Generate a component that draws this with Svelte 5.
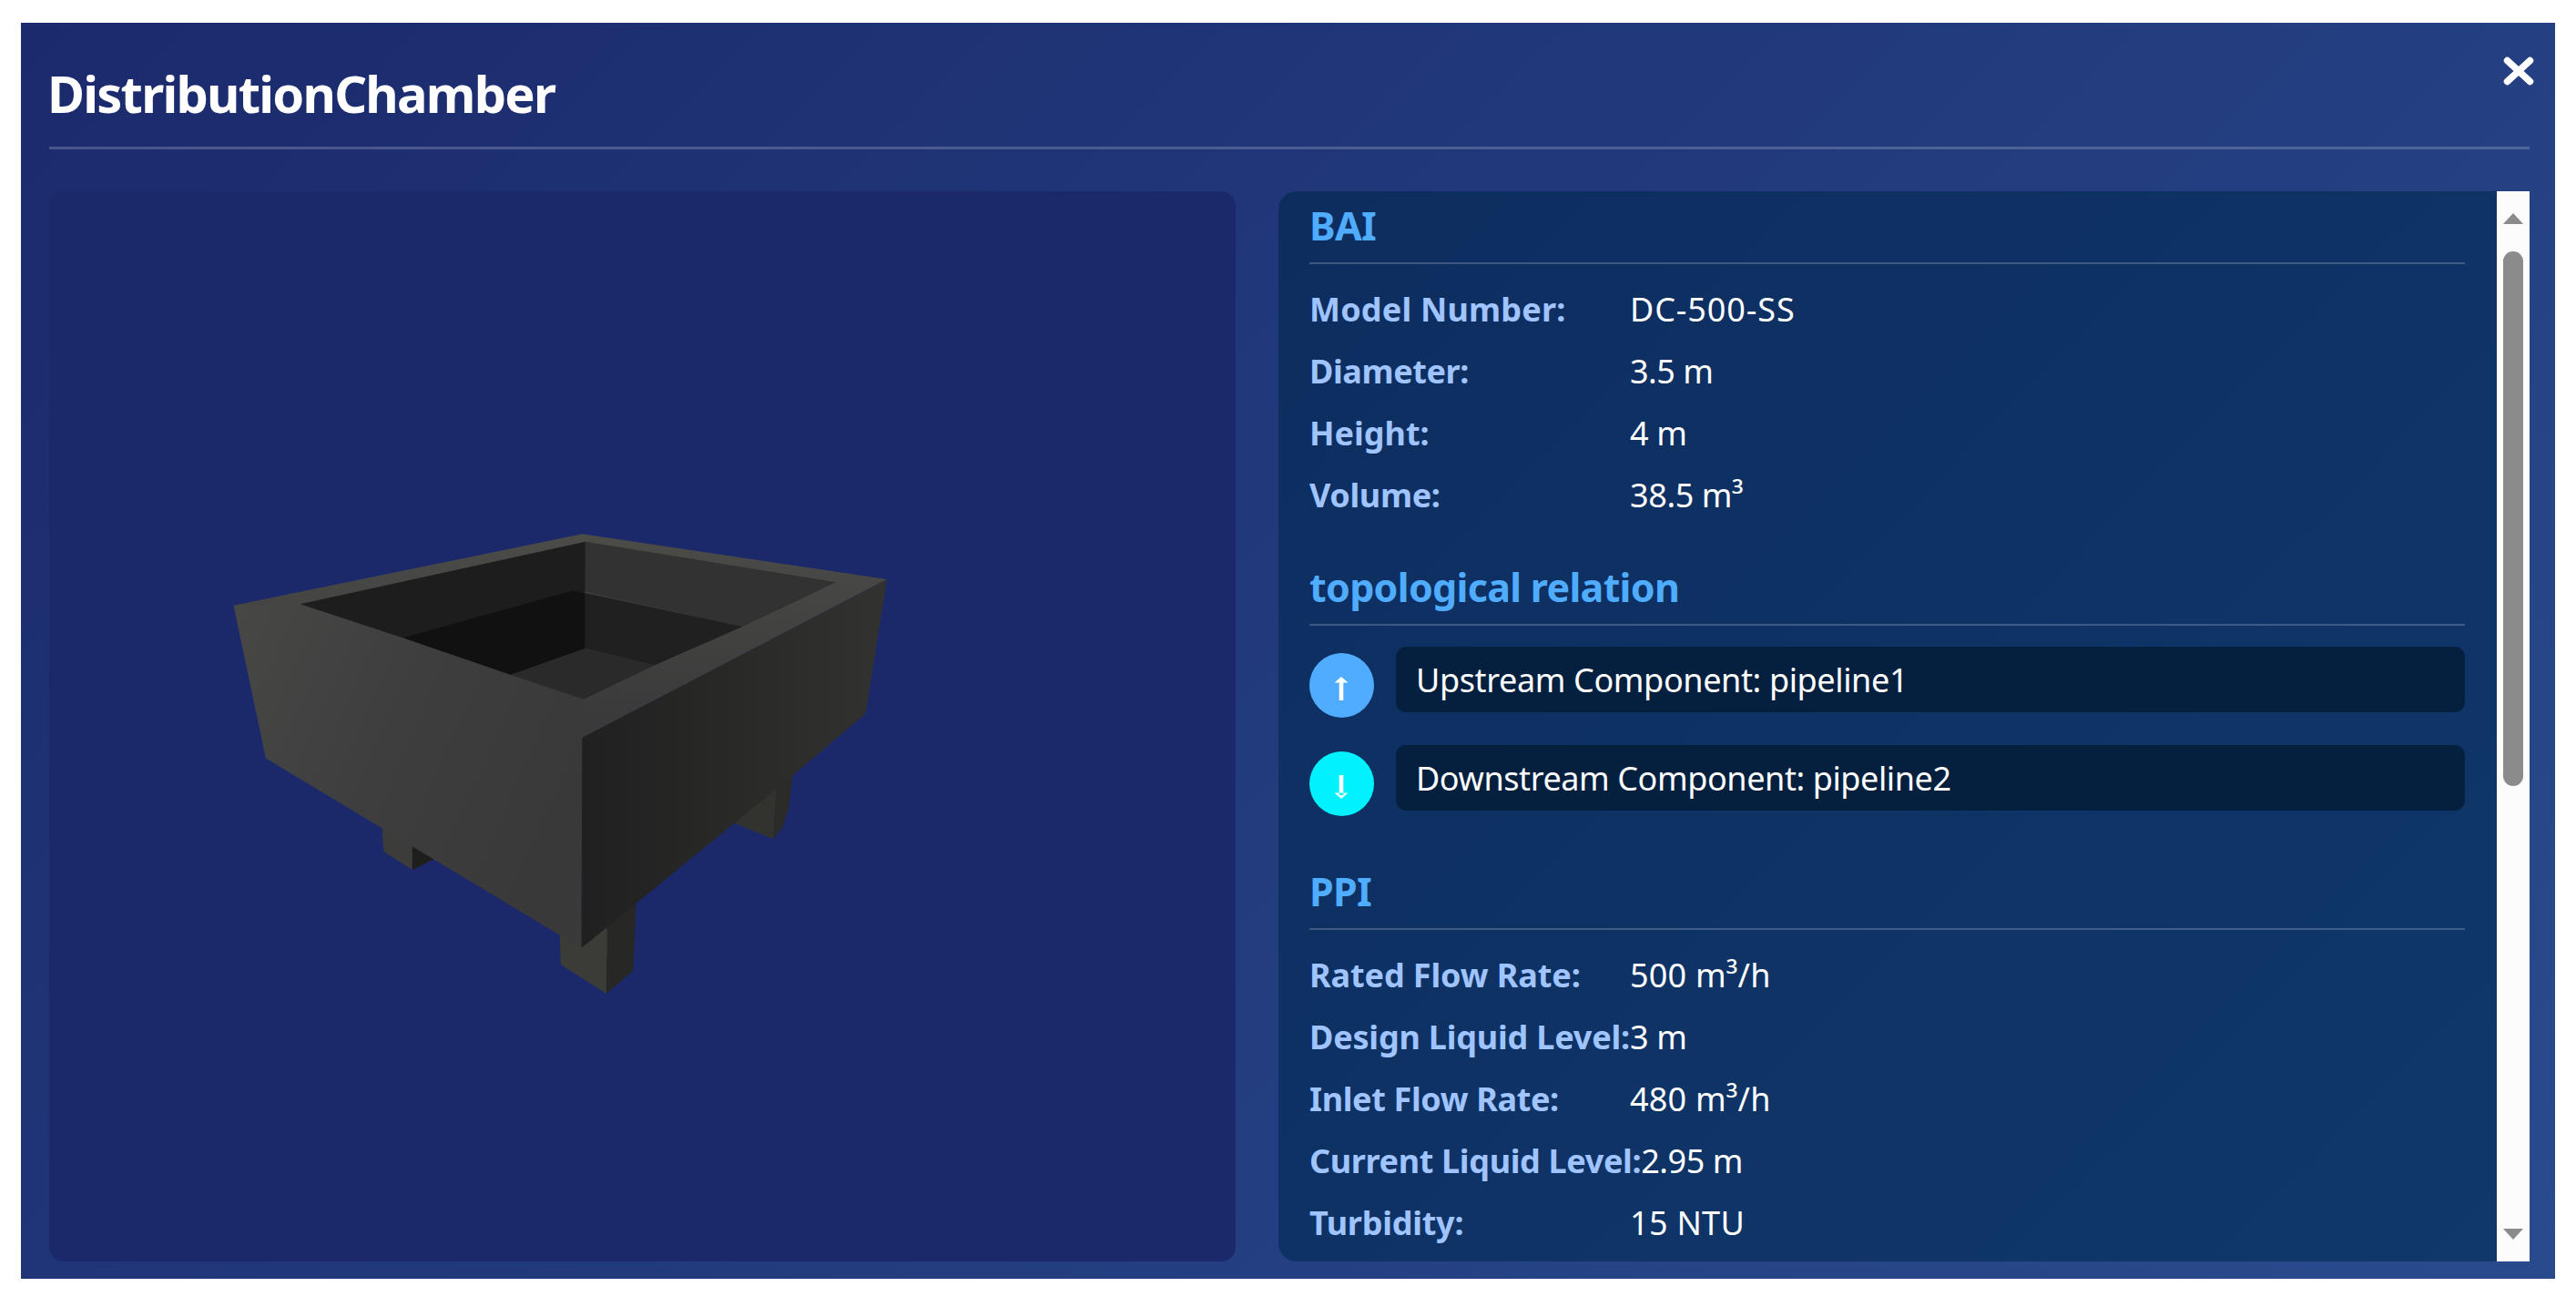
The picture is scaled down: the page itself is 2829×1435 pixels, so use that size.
<script>
  const basicInfo = [
    { label: 'Model Number:', value: 'DC-500-SS', labelTracking: 0.2, tracking: 0.9 },
    { label: 'Diameter:', value: '3.5 m', labelTracking: -0.4, tracking: -0.5 },
    { label: 'Height:', value: '4 m', labelTracking: 0, tracking: -0.4 },
    { label: 'Volume:', value: '38.5 m³', labelTracking: -0.35, tracking: -0.4 }
  ];

  const processInfo = [
    { label: 'Rated Flow Rate:', value: '500 m³/h', labelTracking: -0.1, tracking: 0.2 },
    { label: 'Design Liquid Level:', value: '3 m', labelTracking: -0.2, tracking: -0.4 },
    { label: 'Inlet Flow Rate:', value: '480 m³/h', labelTracking: -0.35, tracking: 0.2 },
    { label: 'Current Liquid Level:', value: '2.95 m', labelTracking: -0.35, tracking: -0.45 },
    { label: 'Turbidity:', value: '15 NTU', labelTracking: -0.25, tracking: 0.3 }
  ];

  let open = $state(true);
</script>

{#snippet rows(items)}
  <ul class="info-list">
    {#each items as item}
      <li>
        <span class="label" style="letter-spacing: {item.labelTracking}px">{item.label}</span>
        <span class="value" style="letter-spacing: {item.tracking}px">{item.value}</span>
      </li>
    {/each}
  </ul>
{/snippet}

{#if open}
  <main class="modal">
    <button class="close" type="button" aria-label="Close" onclick={() => (open = false)}>
      <svg viewBox="0 0 34 32"><path d="M4.5 4.5 29.5 27.5M29.5 4.5 4.5 27.5" /></svg>
    </button>

    <header>
      <h2>DistributionChamber</h2>
    </header>

    <div class="content">
      <section class="model">
        <svg viewBox="53 210 1304 1175" aria-hidden="true">
          <defs>
            <linearGradient id="front" x1="256" y1="680" x2="640" y2="850" gradientUnits="userSpaceOnUse">
              <stop offset="0" stop-color="#474746" />
              <stop offset="0.5" stop-color="#3e3e3e" />
              <stop offset="1" stop-color="#393939" />
            </linearGradient>
            <linearGradient id="side" x1="638" y1="0" x2="973" y2="0" gradientUnits="userSpaceOnUse">
              <stop offset="0" stop-color="#202020" />
              <stop offset="1" stop-color="#323230" />
            </linearGradient>
            <linearGradient id="rim" x1="0" y1="590" x2="0" y2="790" gradientUnits="userSpaceOnUse">
              <stop offset="0" stop-color="#4b4b48" />
              <stop offset="0.5" stop-color="#424241" />
              <stop offset="1" stop-color="#3a3a3a" />
            </linearGradient>
          </defs>

          <!-- Legs -->
          <polygon fill="#3c3c3a" points="418,900 420.3,935 451.8,955 452,915" />
          <polygon fill="#1e1e1d" points="451.8,915 485,930 475.1,943.6 451.8,955" />
          <polygon fill="#32322f" points="804.7,903.3 848.3,921.2 852,860 810,880" />
          <polygon fill="#2b2b28" points="852,860 870.2,846 865,888 858,909 848.3,921.2" />
          <polygon fill="#3b3b38" points="613.2,1010 614.7,1059 665.1,1091 665.6,1000" />
          <polygon fill="#272725" points="665.6,1000 698,985 694.2,1065.9 665.1,1091" />

          <!-- Outer walls and rim -->
          <polygon fill="url(#rim)" points="255.5,664.7 638.4,586.2 973,636.1 638.4,810" />
          <polygon fill="url(#front)" points="255.5,664.7 328.7,663.3 640,767.7 638.4,810 637.5,1041 290.9,832.4" />
          <polygon fill="url(#side)" points="638.4,810 973,636.1 949.6,783.5 870.2,851 637.5,1041" />
          <polygon fill="#3b3b38" points="637.5,1041 665.6,1019 665.6,1050 640,1050" />

          <!-- Inside of the tank -->
          <polygon fill="#1d1d1d" points="328.7,663.3 641.8,594.8 641.8,650 441.2,700.2" />
          <polygon fill="#323232" points="641.8,594.8 917.2,639.2 814.4,688.1 641.8,650" />
          <polygon fill="#111111" points="441.2,700.2 627.8,648.5 641.8,651 641.8,711.9 559.9,741.1" />
          <polygon fill="#202020" points="641.8,651 814.4,688.1 717.5,730.5 641.8,711.9" />
          <polygon fill="#2a2a2a" points="559.9,741.1 641.8,711.9 717.5,730.5 640,767.7" />
        </svg>
      </section>

      <section class="details">
        <div class="scroll">
          <h3>BAI</h3>
          {@render rows(basicInfo)}

          <h3>topological relation</h3>
          <div class="relation">
            <span class="arrow up">
              <svg viewBox="0 0 16 26"><path d="M5.7 4h4.6v22H5.7zM8 0l7.5 6.5H.5z" /></svg>
            </span>
            <p class="upstream">Upstream Component: pipeline1</p>
          </div>
          <div class="relation">
            <span class="arrow down">
              <svg viewBox="0 0 16 26"><path d="M5.7 0h4.6v22H5.7zM8 26l7.5-6.5H.5z" /></svg>
            </span>
            <p class="downstream">Downstream Component: pipeline2</p>
          </div>

          <h3 class="process">PPI</h3>
          {@render rows(processInfo)}
        </div>

        <div class="scrollbar">
          <svg viewBox="0 0 22 12"><path d="M11 0 22 12H0z" /></svg>
          <div class="track"><div class="thumb"></div></div>
          <svg viewBox="0 0 22 12"><path d="M0 0h22L11 12z" /></svg>
        </div>
      </section>
    </div>
  </main>
{/if}

<style>
  :global(body) {
    background: #fff;
  }

  .modal {
    position: relative;
    box-sizing: border-box;
    width: 2783px;
    height: 1379px;
    margin: 25px 0 0 23px;
    padding: 0 28px 19px 31px;
    display: flex;
    flex-direction: column;
    background: linear-gradient(135deg, #1b2a6c, #294b8d);
    color: #fff;
    font-family: "Noto Sans", "Open Sans", sans-serif;
    font-size: 36px;
  }

  .close {
    position: absolute;
    top: 37px;
    right: 23px;
    width: 34px;
    height: 32px;
    padding: 0;
    border: 0;
    background: none;
    cursor: pointer;
  }

  .close svg {
    display: block;
  }

  .close path {
    stroke: #fff;
    stroke-width: 7.5;
    stroke-linecap: round;
  }

  header {
    height: 136px;
    margin-bottom: 46px;
    border-bottom: 3px solid rgba(255, 255, 255, 0.2);
  }

  h2 {
    margin: 0 0 0 -2px;
    padding-top: 41px;
    font-size: 56px;
    line-height: 72px;
    letter-spacing: -1.75px;
  }

  .content {
    flex: 1;
    min-height: 0;
    display: grid;
    grid-template-columns: 1303px 1374px;
    gap: 47px;
  }

  .model {
    border-radius: 16px;
    background: #1b296b;
    overflow: hidden;
  }

  .model svg {
    display: block;
    width: 1304px;
    height: 1175px;
  }

  .details {
    display: flex;
    border-radius: 20px 0 0 20px;
    background: linear-gradient(135deg, #0d2d5f, #10386b);
    overflow: hidden;
  }

  .scroll {
    flex: 1;
    min-width: 0;
    padding: 9px 35px 0 34px;
    overflow: hidden;
  }

  h3 {
    margin: 48px 0 0;
    padding-bottom: 11px;
    border-bottom: 2px solid rgba(255, 255, 255, 0.2);
    color: #4facfe;
    font-size: 43px;
    line-height: 58px;
    letter-spacing: -0.7px;
  }

  h3:first-child {
    margin-top: 0;
  }

  h3.process {
    margin-top: 54px;
  }

  .info-list {
    display: flex;
    flex-direction: column;
    gap: 20px;
    margin: 26px 0 0;
    padding: 0;
    list-style: none;
  }

  li {
    display: flex;
    line-height: 48px;
    white-space: nowrap;
  }

  .label {
    flex: none;
    min-width: 352px;
    color: #a0c4ff;
    font-weight: bold;
  }

  .relation {
    display: flex;
    gap: 24px;
    margin-top: 23px;
  }

  .relation + .relation {
    margin-top: 30px;
  }

  .arrow {
    flex: none;
    display: flex;
    align-items: center;
    justify-content: center;
    width: 71px;
    height: 71px;
    margin-top: 7px;
    border-radius: 50%;
  }

  .arrow svg {
    width: 16px;
    height: 26px;
    margin: 6px 2px 0 0;
    fill: #fff;
  }

  .arrow.up {
    background: #4facfe;
  }

  .arrow.down {
    background: #00f2fe;
  }

  .relation p {
    flex: 1;
    height: 72px;
    box-sizing: border-box;
    margin: 0;
    padding: 12px 22px;
    border-radius: 11px;
    background: #05203f;
    line-height: 50px;
  }

  .upstream {
    letter-spacing: -0.37px;
  }

  .downstream {
    letter-spacing: -0.41px;
  }

  .scrollbar {
    flex: none;
    box-sizing: border-box;
    display: flex;
    flex-direction: column;
    align-items: center;
    width: 36px;
    padding: 24px 0;
    background: #fcfcfc;
  }

  .scrollbar svg {
    width: 22px;
    height: 12px;
    fill: #8b8b8b;
  }

  .track {
    flex: 1;
    padding-top: 30px;
  }

  .thumb {
    width: 22px;
    height: 587px;
    border-radius: 11px;
    background: #8b8b8b;
  }
</style>
